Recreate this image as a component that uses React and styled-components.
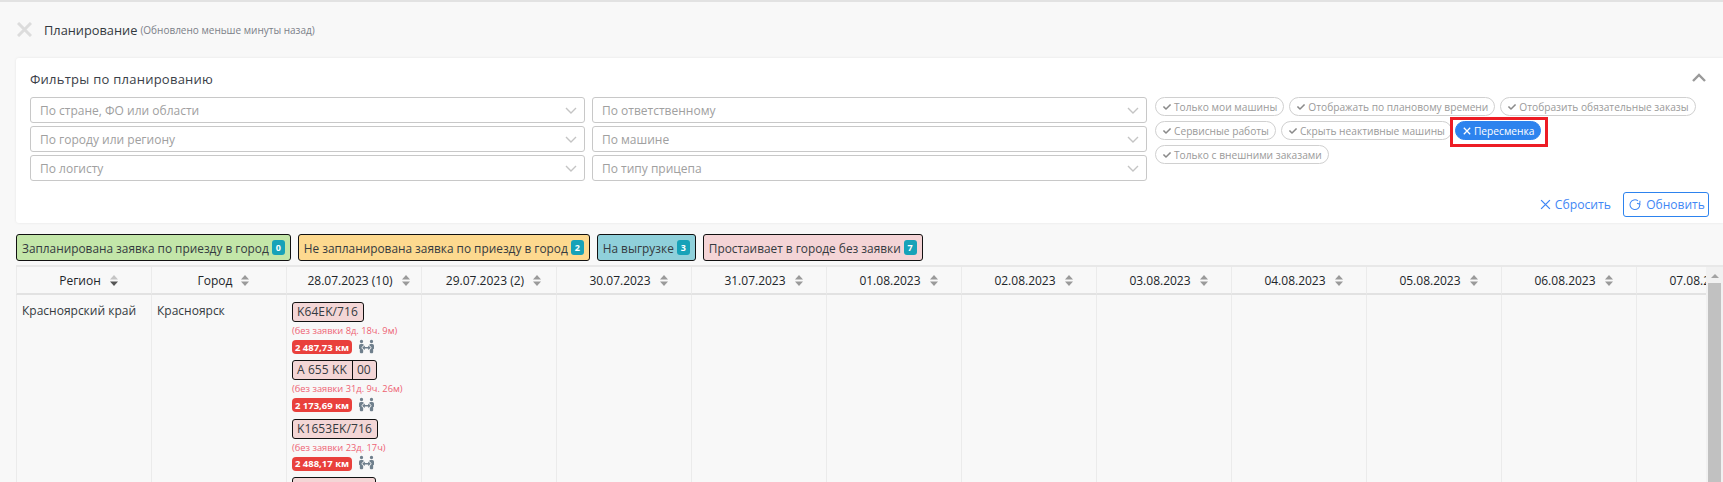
import React from 'react';
import styled, { createGlobalStyle } from 'styled-components';
import { FaPeopleArrows, FaCheck } from 'react-icons/fa';

const Global = createGlobalStyle`
  html, body { margin: 0; padding: 0; background: #f8f8f8; }
  body { font-family: "Open Sans", "Noto Sans", sans-serif; }
  * { box-sizing: border-box; }
`;

const Page = styled.div`
  width: 1723px;
  height: 482px;
  overflow: hidden;
  border-top: 2px solid #e2e2e2;
  padding-left: 16px;
  background: #f8f8f8;
`;

const TopBar = styled.div`
  height: 56px;
  display: flex;
  align-items: center;
  padding-bottom: 1px;
`;

const CloseIcon = styled.svg`
  width: 15px;
  height: 15px;
  margin: 0 12px 0 1px;
  flex: none;
`;

const PageTitle = styled.span`
  font-size: 12.8px;
  color: #343a40;
`;

const Updated = styled.span`
  font-size: 10px;
  color: #7b8088;
  margin-left: 3px;
`;

const Card = styled.section`
  height: 165px;
  background: #fff;
  border-radius: 3px 0 0 3px;
  box-shadow: 0 0 3px rgba(0, 0, 0, 0.08);
  padding: 0 14px;
  display: flex;
  flex-direction: column;
`;

const CardHead = styled.div`
  height: 39px;
  display: flex;
  align-items: center;
  justify-content: space-between;
  padding-top: 3px;
`;

const CardTitle = styled.h2`
  margin: 0;
  font-size: 13px;
  font-weight: 400;
  color: #3a4048;
  letter-spacing: 0.25px;
`;

const Collapse = styled.svg`
  width: 14px;
  height: 9px;
  margin-right: 3px;
  margin-bottom: 3px;
`;

const FilterGrid = styled.div`
  display: grid;
  grid-template-columns: 555px 555px 1fr;
  column-gap: 7px;
  height: 84px;
`;

const SelectColumn = styled.div`
  display: flex;
  flex-direction: column;
  gap: 3.5px;
`;

const Select = styled.div`
  height: 25.5px;
  border: 1px solid #c8c8c8;
  border-radius: 3px;
  display: flex;
  align-items: center;
  justify-content: space-between;
  padding: 1px 7px 0 9px;
  font-size: 12px;
  color: #a0a0a0;
`;

const Chevron = styled.svg`
  width: 12px;
  height: 7px;
`;

const Chips = styled.div`
  display: flex;
  flex-wrap: wrap;
  align-content: flex-start;
  column-gap: 5px;
  row-gap: 5px;
  padding-left: 1px;
`;

const Chip = styled.span`
  position: relative;
  height: 19px;
  padding: 0 6px 0 7px;
  margin-left: ${(p) => (p.$active ? '-2px' : '0')};
  display: inline-flex;
  align-items: center;
  gap: 3px;
  border-radius: 10px;
  font-size: 10.2px;
  white-space: nowrap;
  color: ${(p) => (p.$active ? '#fff' : '#9a9a9a')};
  background: ${(p) => (p.$active ? '#2d83ee' : '#fff')};
  border: 1px solid ${(p) => (p.$active ? '#2d83ee' : '#d0d0d0')};

  svg { flex: none; color: #8a8a8a; }

  ${(p) =>
    p.$marked &&
    `&::after {
      content: '';
      position: absolute;
      inset: -5px -8px -8px -6px;
      border: 3px solid #ed1c24;
    }`}
`;

const ChipCross = styled.svg`
  width: 8px;
  height: 8px;
`;

const CardFooter = styled.div`
  display: flex;
  justify-content: flex-end;
  align-items: center;
  gap: 12px;
  height: 25px;
  margin-top: 11px;
`;

const ResetLink = styled.span`
  display: inline-flex;
  align-items: center;
  gap: 4px;
  font-size: 12.2px;
  color: #3f87f5;
`;

const RefreshButton = styled.span`
  height: 25px;
  width: 86px;
  display: inline-flex;
  align-items: center;
  justify-content: center;
  gap: 5px;
  border: 1px solid #2d83ee;
  border-radius: 3px;
  font-size: 12px;
  color: #3f87f5;
  background: #fff;
  svg { margin-left: 2px; }
`;

const Legend = styled.div`
  display: flex;
  gap: 7px;
  margin-top: 11px;
  height: 27px;
`;

const LegendItem = styled.div`
  display: inline-flex;
  align-items: center;
  padding: 0 5px;
  gap: 3px;
  border: 1px solid #111;
  border-radius: 3px;
  font-size: 11.85px;
  color: #343a40;
  white-space: nowrap;
  background: ${(p) => p.$bg};
`;

const Count = styled.span`
  min-width: 13px;
  height: 15px;
  border-radius: 3px;
  background: #17a2b8;
  color: #fff;
  font-size: 9px;
  font-weight: 700;
  display: inline-flex;
  align-items: center;
  justify-content: center;
`;

const TableFrame = styled.div`
  display: flex;
  margin-top: 4px;
  height: 218px;
  border-top: 2px solid #e8e8e8;
`;

const TableView = styled.div`
  flex: 1;
  min-width: 0;
  overflow: hidden;
`;

const Row = styled.div`
  display: flex;
  width: max-content;
`;

const HeadCell = styled.div`
  width: 135px;
  flex: none;
  height: 28px;
  border-right: 1px solid #ebebeb;
  border-bottom: 2px solid #e2e2e2;
  display: flex;
  align-items: center;
  justify-content: center;
  gap: 9px;
  padding-left: 9px;
  font-size: 12px;
  font-weight: 500;
  color: #212529;

  &:first-child {
    width: 136px;
    border-left: 1px solid #ebebeb;
  }
`;

const SortIcon = styled.svg`
  width: 8px;
  height: 11px;
  flex: none;
`;

const BodyCell = styled.div`
  width: 135px;
  flex: none;
  height: 190px;
  border-right: 1px solid #ebebeb;
  padding: 7px 5px;
  font-size: 12px;
  line-height: 17px;
  color: #343a40;

  &:first-child {
    width: 136px;
    border-left: 1px solid #ebebeb;
  }
`;

const Entry = styled.div`
  height: 58.3px;
`;

const Plate = styled.div`
  display: inline-flex;
  height: 20px;
  min-width: ${(p) => p.$min || 0}px;
  border: 1px solid #111;
  border-radius: 3px;
  background: #f3d6d6;
  font-size: 12px;
  line-height: 18px;
  letter-spacing: 0.1px;
  color: #343a40;
`;

const PlatePart = styled.span`
  padding: 0 5px 0 4px;
  & + & { border-left: 1px solid #111; }
`;

const Idle = styled.div`
  font-size: 9.3px;
  line-height: 12px;
  margin-top: 3px;
  color: #ee6273;
  white-space: nowrap;
`;

const DistanceRow = styled.div`
  display: flex;
  align-items: center;
  gap: 7px;
  margin-top: 3px;
  svg { color: #6f7f8c; margin-top: -2px; }
`;

const Distance = styled.span`
  height: 14px;
  width: 60px;
  border-radius: 4px;
  background: #e9403c;
  color: #fff;
  font-size: 9.5px;
  font-weight: 700;
  display: inline-flex;
  align-items: center;
  justify-content: center;
  white-space: nowrap;
`;

const Scrollbar = styled.div`
  width: 17px;
  flex: none;
  background: #f1f1f1;
  display: flex;
  flex-direction: column;
  align-items: center;
`;

const ScrollArrow = styled.div`
  width: 0;
  height: 0;
  margin: 7px 0 5px;
  border-left: 4px solid transparent;
  border-right: 4px solid transparent;
  border-bottom: 4px solid #a3a3a3;
`;

const ScrollThumb = styled.div`
  width: 13px;
  flex: 1;
  background: #c1c1c1;
`;

const Sort = ({ active }) => (
  <SortIcon viewBox="0 0 8 11">
    <path d="M4 0 L8 4.5 H0 Z" fill={active ? '#c4c4c4' : '#9a9a9a'} />
    <path d="M4 11 L8 6.5 H0 Z" fill={active ? '#555' : '#9a9a9a'} />
  </SortIcon>
);

const Down = () => (
  <Chevron viewBox="0 0 12 7">
    <path d="M1 1 L6 6 L11 1" fill="none" stroke="#c4c4c4" strokeWidth="1.4" />
  </Chevron>
);

const Cross = ({ color = '#fff', size = 8, width = 1.6 }) => (
  <ChipCross viewBox="0 0 10 10" style={{ width: size, height: size }}>
    <path d="M1 1 L9 9 M9 1 L1 9" stroke={color} strokeWidth={width} />
  </ChipCross>
);

const selectsA = ['По стране, ФО или области', 'По городу или региону', 'По логисту'];
const selectsB = ['По ответственному', 'По машине', 'По типу прицепа'];
const chips = [
  'Только мои машины',
  'Отображать по плановому времени',
  'Отобразить обязательные заказы',
  'Сервисные работы',
  'Скрыть неактивные машины',
];
const legend = [
  ['Запланирована заявка по приезду в город', 0, '#c3e6a9'],
  ['Не запланирована заявка по приезду в город', 2, '#fdd98f'],
  ['На выгрузке', 3, '#8fd0da'],
  ['Простаивает в городе без заявки', 7, '#f4d4d6'],
];
const dates = [
  '28.07.2023 (10)', '29.07.2023 (2)', '30.07.2023', '31.07.2023', '01.08.2023', '02.08.2023',
  '03.08.2023', '04.08.2023', '05.08.2023', '06.08.2023', '07.08.2023',
];
const entries = [
  { plate: ['K64EK/716'], idle: '(без заявки 8д. 18ч. 9м)', km: '2 487,73 км' },
  { plate: ['A 655 KK', '00'], idle: '(без заявки 31д. 9ч. 26м)', km: '2 173,69 км' },
  { plate: ['K1653EK/716'], idle: '(без заявки 23д. 17ч)', km: '2 488,17 км' },
];

export default function App() {
  return (
    <Page>
      <Global />
      <TopBar>
        <CloseIcon viewBox="0 0 15 15">
          <path d="M1 1 L14 14 M14 1 L1 14" stroke="#dcdcdc" strokeWidth="3" />
        </CloseIcon>
        <PageTitle>Планирование</PageTitle>
        <Updated>(Обновлено меньше минуты назад)</Updated>
      </TopBar>

      <Card>
        <CardHead>
          <CardTitle>Фильтры по планированию</CardTitle>
          <Collapse viewBox="0 0 14 9">
            <path d="M1 8 L7 2 L13 8" fill="none" stroke="#9a9a9a" strokeWidth="2.4" />
          </Collapse>
        </CardHead>
        <FilterGrid>
          <SelectColumn>
            {selectsA.map((s) => (
              <Select key={s}>{s}<Down /></Select>
            ))}
          </SelectColumn>
          <SelectColumn>
            {selectsB.map((s) => (
              <Select key={s}>{s}<Down /></Select>
            ))}
          </SelectColumn>
          <Chips>
            {chips.map((c) => (
              <Chip key={c}><FaCheck size={8} />{c}</Chip>
            ))}
            <Chip $active $marked><Cross />Пересменка</Chip>
            <Chip><FaCheck size={8} />Только с внешними заказами</Chip>
          </Chips>
        </FilterGrid>
        <CardFooter>
          <ResetLink><Cross color="#3f87f5" size={11} width={1.2} />Сбросить</ResetLink>
          <RefreshButton>
            <svg width="12" height="12" viewBox="0 0 14 14" fill="none" stroke="#3f87f5" strokeWidth="1.2">
              <path d="M10.5 2.2 A5.7 5.7 0 1 0 12.6 6.2" />
              <path d="M12.8 2 L12.6 6.2 L9.4 5" />
            </svg>
            Обновить
          </RefreshButton>
        </CardFooter>
      </Card>

      <Legend>
        {legend.map(([t, n, bg]) => (
          <LegendItem key={t} $bg={bg}>{t}<Count>{n}</Count></LegendItem>
        ))}
      </Legend>

      <TableFrame>
        <TableView>
          <Row>
            <HeadCell>Регион <Sort active /></HeadCell>
            <HeadCell>Город <Sort /></HeadCell>
            {dates.map((d) => (
              <HeadCell key={d}>{d} <Sort /></HeadCell>
            ))}
          </Row>
          <Row>
            <BodyCell>Красноярский край</BodyCell>
            <BodyCell>Красноярск</BodyCell>
            <BodyCell>
              {entries.map((e) => (
                <Entry key={e.km}>
                  <Plate>
                    {e.plate.map((p) => <PlatePart key={p}>{p}</PlatePart>)}
                  </Plate>
                  <Idle>{e.idle}</Idle>
                  <DistanceRow>
                    <Distance>{e.km}</Distance>
                    <FaPeopleArrows size={15} />
                  </DistanceRow>
                </Entry>
              ))}
              <Plate $min={84} />
            </BodyCell>
            {dates.slice(1).map((d) => <BodyCell key={d} />)}
          </Row>
        </TableView>
        <Scrollbar>
          <ScrollArrow />
          <ScrollThumb />
        </Scrollbar>
      </TableFrame>
    </Page>
  );
}
